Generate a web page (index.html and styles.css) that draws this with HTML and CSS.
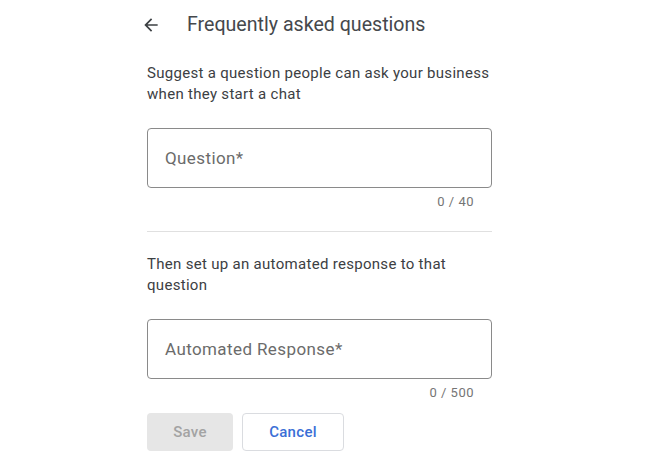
FILE: index.html
```html
<!DOCTYPE html>
<html>
<head>
<meta charset="utf-8">
<link rel="stylesheet" href="styles.css">
</head>
<body>
<div class="page">
  <header class="head">
    <svg class="back" width="20" height="20" viewBox="0 0 24 24"><path d="M20 11H7.83l5.59-5.59L12 4l-8 8 8 8 1.41-1.41L7.83 13H20v-2z" fill="#3c4043"/></svg>
    <h1 class="title">Frequently asked questions</h1>
  </header>
  <main class="form">
    <p class="desc">Suggest a question people can ask your business when they start a chat</p>
    <div class="field"><span class="ph">Question*</span></div>
    <div class="count">0 / 40</div>
    <hr class="divider">
    <p class="desc">Then set up an automated response to that question</p>
    <div class="field"><span class="ph">Automated Response*</span></div>
    <div class="count">0 / 500</div>
    <div class="actions">
      <button class="btn save">Save</button>
      <button class="btn cancel">Cancel</button>
    </div>
  </main>
</div>
</body>
</html>
```
FILE: styles.css
```css
html, body { margin: 0; padding: 0; background: #fff; }
body { font-family: Roboto, "Noto Sans", Arial, sans-serif; color: #3c4043; }
.page { width: 652px; height: 471px; overflow: hidden; }
.head { display: flex; align-items: center; padding: 14px 0 0 141px; height: 22px; }
.back { display: block; }
.title { margin: 0 0 0 26px; font-size: 19.6px; font-weight: 400; color: #45484c; line-height: 22px; }
.form { width: 345px; margin: 0 0 0 147px; padding-top: 27px; }
.desc { margin: 0; font-size: 15px; letter-spacing: 0.3px; line-height: 21px; color: #3c4043; }
.field { margin-top: 23px; height: 58px; border: 1px solid #8a8a8a; border-radius: 4px; display: flex; align-items: center; padding-left: 17px; }
.ph { font-size: 17px; letter-spacing: 0.4px; color: #6b6b6b; }
.count { text-align: right; padding-right: 18px; font-size: 13px; letter-spacing: 0.5px; color: #757575; margin-top: 6px; line-height: 15px; }
.divider { border: 0; border-top: 1px solid #e0e0e0; margin: 22px 0 22px; }
.actions { display: flex; gap: 9px; margin-top: 13px; }
.btn { height: 38px; border-radius: 4px; font-family: inherit; font-size: 15px; letter-spacing: 0.3px; font-weight: 500; padding: 0; }
.save { width: 86px; background: #e6e6e6; border: 0; color: #a3a3a3; }
.cancel { width: 102px; background: #fff; border: 1px solid #dadce0; color: #3b6fd6; }
```
